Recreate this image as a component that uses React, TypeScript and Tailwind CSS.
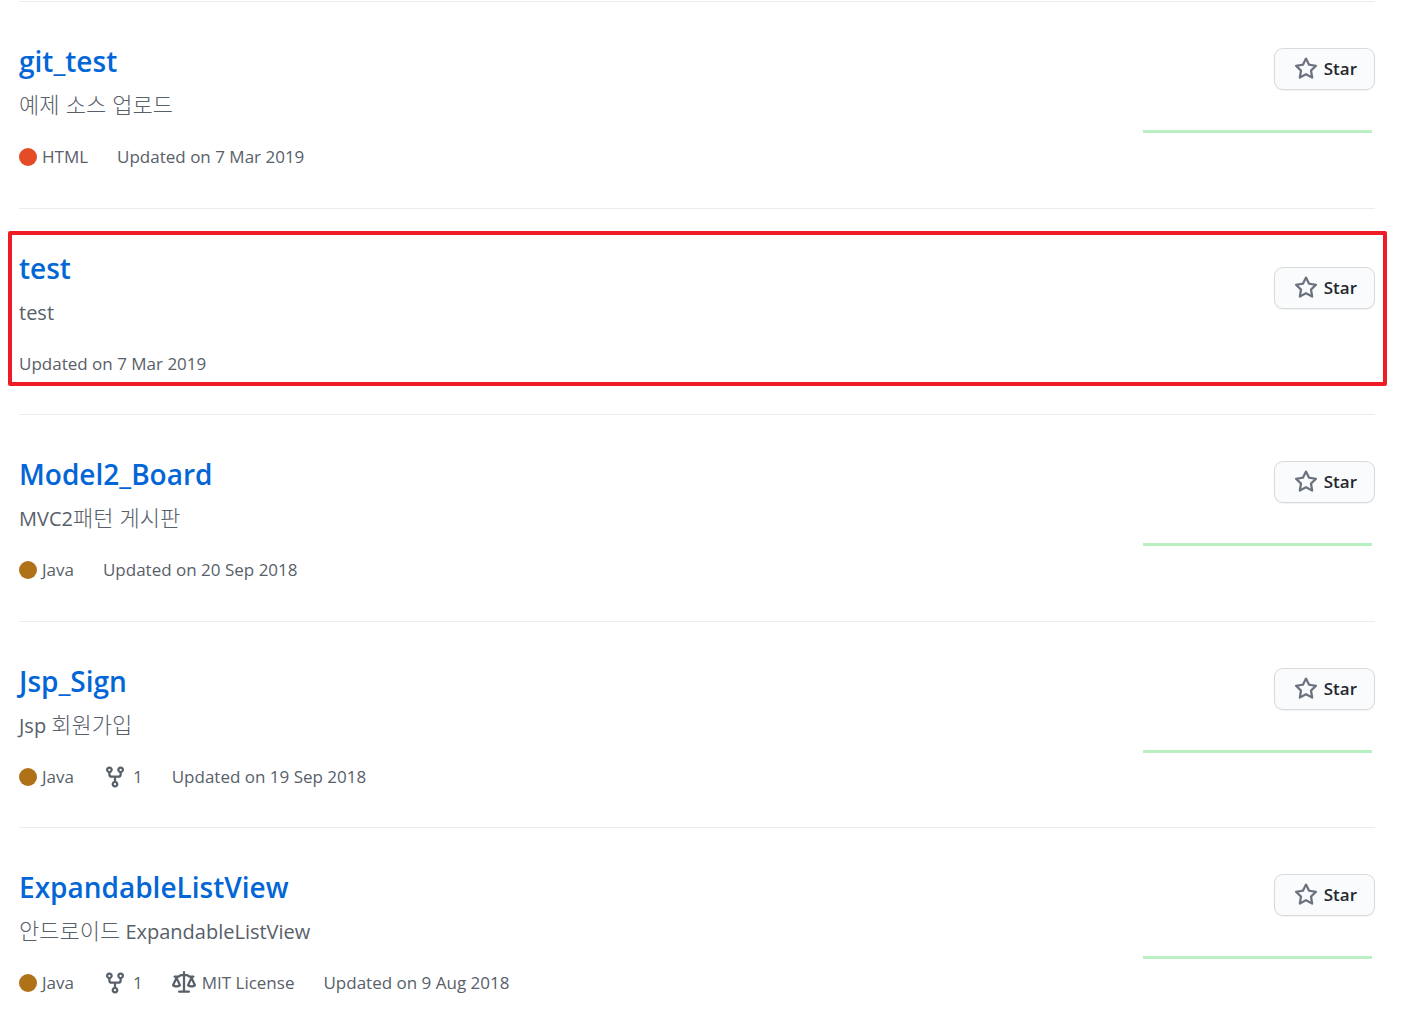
interface Repo {
  name: string;
  description: string;
  language?: "HTML" | "Java";
  forks?: number;
  license?: string;
  updated: string;
  hasActivity: boolean;
  highlighted?: boolean;
}

const repos: Repo[] = [
  { name: "git_test", description: "예제 소스 업로드", language: "HTML", updated: "7 Mar 2019", hasActivity: true },
  { name: "test", description: "test", updated: "7 Mar 2019", hasActivity: false, highlighted: true },
  { name: "Model2_Board", description: "MVC2패턴 게시판", language: "Java", updated: "20 Sep 2018", hasActivity: true },
  { name: "Jsp_Sign", description: "Jsp 회원가입", language: "Java", forks: 1, updated: "19 Sep 2018", hasActivity: true },
  {
    name: "ExpandableListView",
    description: "안드로이드 ExpandableListView",
    language: "Java",
    forks: 1,
    license: "MIT License",
    updated: "9 Aug 2018",
    hasActivity: true,
  },
];

const languageColors = {
  HTML: "bg-[#e34c26]",
  Java: "bg-[#b07219]",
};

const icons = {
  star: "M8 .25a.75.75 0 01.673.418l1.882 3.815 4.21.612a.75.75 0 01.416 1.279l-3.046 2.97.719 4.192a.75.75 0 01-1.088.791L8 12.347l-3.766 1.98a.75.75 0 01-1.088-.79l.72-4.194L.818 6.374a.75.75 0 01.416-1.28l4.21-.611L7.327.668A.75.75 0 018 .25zm0 2.445L6.615 5.5a.75.75 0 01-.564.41l-3.097.45 2.24 2.184a.75.75 0 01.216.664l-.528 3.084 2.769-1.456a.75.75 0 01.698 0l2.77 1.456-.53-3.084a.75.75 0 01.216-.664l2.24-2.183-3.096-.45a.75.75 0 01-.564-.41L8 2.694v.001z",
  fork: "M5 3.25a.75.75 0 11-1.5 0 .75.75 0 011.5 0zm0 2.122a2.25 2.25 0 10-1.5 0v.878A2.25 2.25 0 005.75 8.5h1.5v2.128a2.251 2.251 0 101.5 0V8.5h1.5a2.25 2.25 0 002.25-2.25v-.878a2.25 2.25 0 10-1.5 0v.878a.75.75 0 01-.75.75h-4.5A.75.75 0 015 6.25v-.878zm3.75 7.378a.75.75 0 11-1.5 0 .75.75 0 011.5 0zm3-8.75a.75.75 0 100-1.5.75.75 0 000 1.5z",
  law: "M8.75.75a.75.75 0 00-1.5 0V2h-.984c-.305 0-.604.08-.869.23l-1.288.737A.25.25 0 013.984 3H1.75a.75.75 0 000 1.5h.428L.066 9.192a.75.75 0 00.154.838c.04.04.55.97 2.78.97s2.74-.93 2.78-.97a.75.75 0 00.154-.838L3.822 4.5h.162c.305 0 .604-.08.869-.23l1.289-.737a.25.25 0 01.124-.033h.984V13h-2.5a.75.75 0 000 1.5h6.5a.75.75 0 000-1.5h-2.5V3.5h.984a.25.25 0 01.124.033l1.29.736c.264.152.563.231.868.231h.162l-2.112 4.692a.75.75 0 00.154.838c.04.04.55.97 2.78.97s2.74-.93 2.78-.97a.75.75 0 00.154-.838L13.822 4.5h.428a.75.75 0 000-1.5h-2.234a.25.25 0 01-.124-.033l-1.29-.736A1.75 1.75 0 009.735 2H8.75V.75zM1.695 9.227c.285.135.718.273 1.305.273s1.02-.138 1.305-.273L3 6.327l-1.305 2.9zm10 0c.285.135.718.273 1.305.273s1.02-.138 1.305-.273L13 6.327l-1.305 2.9z",
};

function Icon({ name, className }: { name: keyof typeof icons; className?: string }) {
  return (
    <svg viewBox="0 0 16 16" width="24" height="24" fill="currentColor" fillRule="evenodd" aria-hidden="true" className={className}>
      <path d={icons[name]} />
    </svg>
  );
}

function StarButton() {
  return (
    <button
      type="button"
      className="flex h-[42px] items-center gap-1.5 rounded-[9px] border border-[#1b1f24]/15 bg-[#fafbfc] pr-[17px] pl-[19px] text-[17px] font-semibold text-[#24292e] shadow-[0_1px_1px_rgba(27,31,35,0.06)]"
    >
      <Icon name="star" className="text-[#6a737d]" />
      Star
    </button>
  );
}

// Hangul runs are set a little larger and lighter than the Latin text around them
function Description({ text }: { text: string }) {
  const parts = text.split(/([가-힣]+(?:\s+[가-힣]+)*)/).filter(Boolean);

  return (
    <p className="mt-1.5 text-[20px] leading-8 text-[#586069]">
      {parts.map((part, index) =>
        /[가-힣]/.test(part) ? (
          <span key={index} lang="ko" className="font-['Noto_Sans_CJK_KR',sans-serif] text-[22px] leading-none font-light">
            {part}
          </span>
        ) : (
          part
        )
      )}
    </p>
  );
}

function RepoRow({ repo }: { repo: Repo }) {
  return (
    <li className="relative flex justify-between border-b border-[#eaecef] pt-9 odd:min-h-[207px] even:min-h-[206px]">
      <div>
        <h3 className="text-[28px] leading-[46px] font-semibold">
          <a href={`#${repo.name}`} className="text-[#0366d6] hover:underline">
            {repo.name}
          </a>
        </h3>
        <Description text={repo.description} />
        <div className="mt-[21px] flex h-7 items-center gap-[29px] text-[17px] text-[#586069]">
          {repo.language && (
            <span className="flex items-center gap-[5px]">
              <span className={`size-[18px] rounded-full ${languageColors[repo.language]}`} />
              {repo.language}
            </span>
          )}
          {repo.forks && (
            <a href="#forks" className="flex items-center gap-1.5">
              <Icon name="fork" />
              {repo.forks}
            </a>
          )}
          {repo.license && (
            <span className="flex items-center gap-1.5">
              <Icon name="law" />
              {repo.license}
            </span>
          )}
          <span>Updated on {repo.updated}</span>
        </div>
      </div>

      <div className={`flex flex-col items-end ${repo.hasActivity ? "pt-2.5" : "pt-[22px]"}`}>
        <StarButton />
        {repo.hasActivity && (
          <div className="mt-10 w-[232px] pr-[3px]">
            <div className="h-[3px] bg-[#b9f0c1]" />
          </div>
        )}
      </div>

      {repo.highlighted && (
        <div className="pointer-events-none absolute top-[22px] -right-3 bottom-7 -left-[11px] rounded-xs border-4 border-[#ee1c25]" />
      )}
    </li>
  );
}

export default function App() {
  return (
    <main className="bg-white pt-px pr-[43px] pl-[19px] font-['Open_Sans','Noto_Sans_CJK_KR',sans-serif]">
      <ul className="border-t border-[#eaecef]">
        {repos.map((repo) => (
          <RepoRow key={repo.name} repo={repo} />
        ))}
      </ul>
    </main>
  );
}
